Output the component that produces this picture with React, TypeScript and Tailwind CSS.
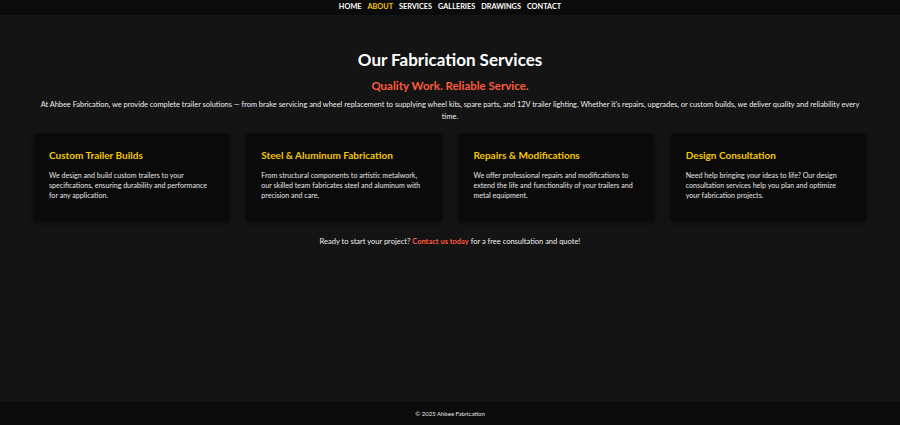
const links = ["HOME", "ABOUT", "SERVICES", "GALLERIES", "DRAWINGS", "CONTACT"];

const services = [
  {
    title: "Custom Trailer Builds",
    text: "We design and build custom trailers to your specifications, ensuring durability and performance for any application.",
  },
  {
    title: "Steel & Aluminum Fabrication",
    text: "From structural components to artistic metalwork, our skilled team fabricates steel and aluminum with precision and care.",
  },
  {
    title: "Repairs & Modifications",
    text: "We offer professional repairs and modifications to extend the life and functionality of your trailers and metal equipment.",
  },
  {
    title: "Design Consultation",
    text: "Need help bringing your ideas to life? Our design consultation services help you plan and optimize your fabrication projects.",
  },
];

export default function App() {
  return (
    <div className="flex min-h-[425px] flex-col bg-[#141414] font-['Lato',sans-serif] text-white">
      <nav className="flex h-[15px] items-center justify-center gap-[6px] bg-[#0b0b0b] text-[7.3px] font-bold">
        {links.map((l) => (
          <a key={l} className={l === "ABOUT" ? "text-[#f5c800]" : "text-white"}>
            {l}
          </a>
        ))}
      </nav>

      <main className="flex-1 px-[34px] pt-[35px]">
        <h1 className="text-center text-[17px] font-bold leading-[20px]">Our Fabrication Services</h1>
        <h2 className="mt-[8px] text-center text-[11.5px] font-bold leading-[16px] text-[#ff5a3c]">
          Quality Work. Reliable Service.
        </h2>
        <p className="mx-auto mt-[5px] max-w-[822px] text-center text-[7.4px] leading-[12px] text-[#eeeeee]">
          At Ahbee Fabrication, we provide complete trailer solutions — from brake servicing and wheel replacement
          to supplying wheel kits, spare parts, and 12V trailer lighting. Whether it's repairs, upgrades, or custom
          builds, we deliver quality and reliability every time.
        </p>

        <div className="mt-[10px] grid grid-cols-4 gap-[17px]">
          {services.map((s) => (
            <div
              key={s.title}
              className="h-[88px] rounded-[4px] bg-[#0a0a0a] px-[15px] pt-[15px] shadow-[0_2px_6px_rgba(0,0,0,0.5)]"
            >
              <h3 className="text-[10px] font-bold leading-[14px] text-[#f5c800]">{s.title}</h3>
              <p className="mt-[9px] text-[7.1px] leading-[10px] text-[#e5e5e5]">{s.text}</p>
            </div>
          ))}
        </div>

        <p className="mt-[15px] text-center text-[7.5px] leading-[12px] text-[#eeeeee]">
          Ready to start your project?{" "}
          <a className="font-bold text-[#ff5a3c]">Contact us today</a> for a free consultation and quote!
        </p>
      </main>

      <footer className="flex h-[23px] items-center justify-center bg-[#0b0b0b] text-[6px] text-[#e5e5e5]">
        © 2025 Ahbee Fabrication
      </footer>
    </div>
  );
}
